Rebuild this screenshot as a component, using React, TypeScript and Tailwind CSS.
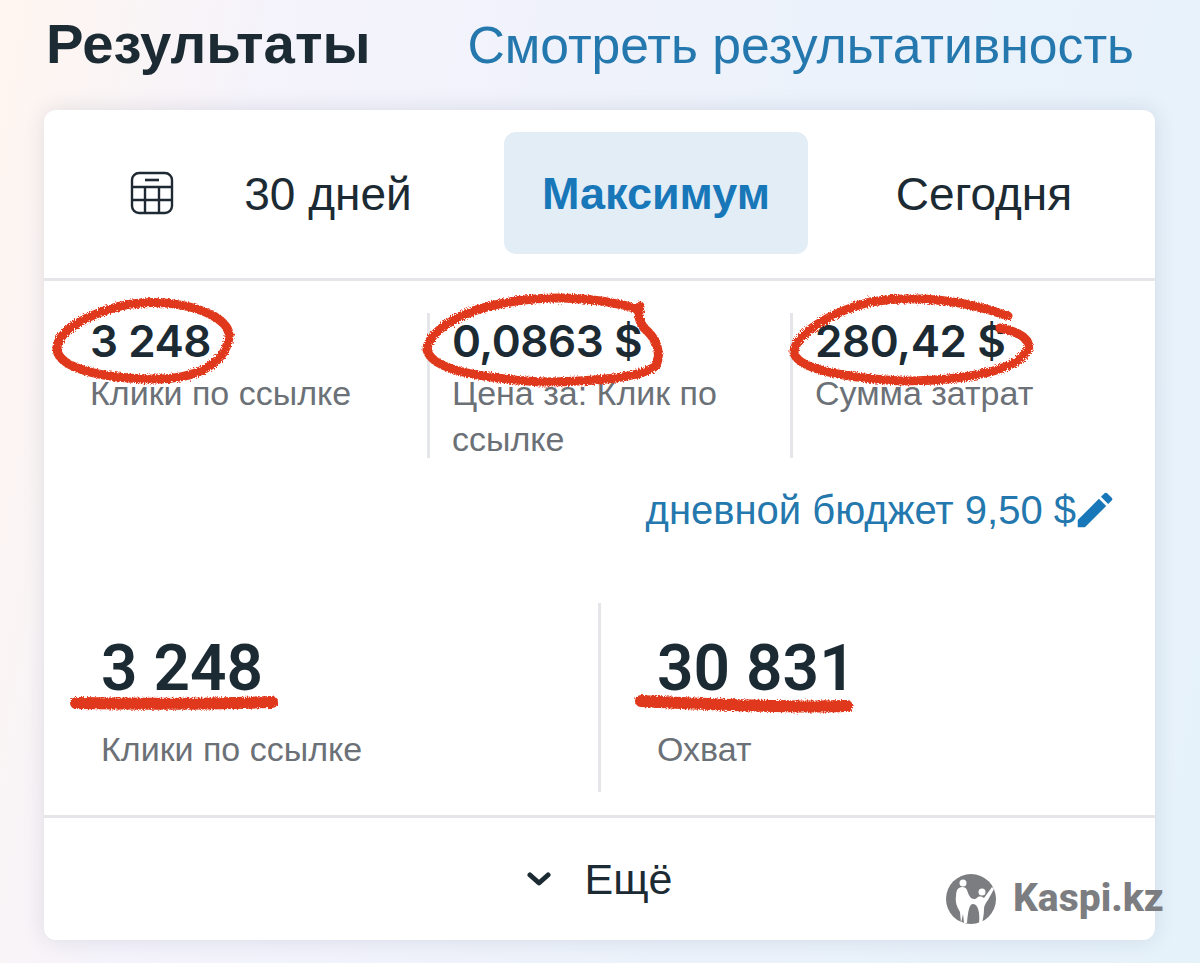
import React from 'react';
import { MdEdit } from 'react-icons/md';

const sans = "font-['Liberation_Sans',Arial,sans-serif]";

const CalendarIcon = () => (
  <svg width="44" height="44" viewBox="0 0 44 44" fill="none" stroke="#1f2933" strokeWidth="2.4">
    <rect x="2" y="2" width="40" height="40" rx="7" />
    <path d="M15 9h14" strokeWidth="2.6" />
    <path d="M2 16h40M2 29h40M15 16v26M29 16v26" />
  </svg>
);

const KaspiMark = () => (
  <svg width="50" height="50" viewBox="0 0 50 50">
    <circle cx="25" cy="25" r="25" fill="#7b7d80" />
    <g fill="#fff">
      <circle cx="17" cy="9" r="3.500" />
      <circle cx="36" cy="18" r="3.500" />
      <path d="M13 14C16 12 20 13 21 16C22 19 23 22 25 24C28 26 30 25 32 23C34 22 37 23 38 24L46 13L48 15L42 26C40 29 38 31 38 35C38 40 37 45 36 49L33 49C34 42 33 30 27 30C23 30 22 38 21 49L18 49L17 40L15 49L14 38C11 33 9 28 10 22C10 18 11 15 13 14Z" />
    </g>
  </svg>
);

// red marker strokes someone drew over the screenshot
const Scribbles = () => (
  <svg className="absolute inset-0 pointer-events-none" width="1200" height="963" viewBox="0 0 1200 963" fill="none">
    <defs>
      <filter id="rough" x="-5%" y="-20%" width="110%" height="140%">
        <feTurbulence type="fractalNoise" baseFrequency="0.7" numOctaves="2" seed="4" />
        <feDisplacementMap in="SourceGraphic" scale="5" />
      </filter>
    </defs>
    <g stroke="#e0391a" strokeWidth="9" strokeLinecap="round" filter="url(#rough)">
      <path d="M222 322C200 304 150 296 110 309C75 320 56 336 57 350C60 368 100 378 150 379C195 380 224 365 229 338C230 330 224 322 214 316" />
      <path d="M640 310C600 296 540 294 490 306C450 316 427 336 427 350C432 370 480 378 540 382C590 382 640 378 656 366C662 352 656 338 644 328C638 320 638 312 640 306" />
      <path d="M1008 316C970 302 920 294 870 302C830 312 795 335 794 352C796 370 850 378 900 381C960 381 1020 372 1029 347C1028 336 1015 331 1000 328" />
      <path strokeWidth="12" d="M76 703C130 704 210 704 272 702" />
      <path strokeWidth="12" d="M641 701C700 704 780 708 847 706" />
    </g>
  </svg>
);

const Metric = ({ value, label, divided }: { value: string; label: React.ReactNode; divided?: boolean }) => (
  <div className={`h-[145px] border-[#e4e6e9] ${divided ? 'border-l-[3px] pl-[22px]' : 'pl-[26px]'}`}>
    <div className="font-['Inter',sans-serif] text-[44px] leading-[57px] font-semibold tracking-[-0.01em] text-[#1c2b33]">{value}</div>
    <div className="text-[34px] leading-[46px] text-[#6b7177]">{label}</div>
  </div>
);

const BigMetric = ({ value, label, className }: { value: string; label: string; className: string }) => (
  <div className={`pt-[31px] ${className}`}>
    <div className="font-['Roboto',sans-serif] text-[64px] leading-[70px] font-semibold text-[#1c2b33]">{value}</div>
    <div className="mt-[22px] text-[34px] leading-[46px] text-[#6b7177]">{label}</div>
  </div>
);

export default function App() {
  return (
    <div className={`${sans} relative h-[963px] w-[1200px] overflow-hidden bg-[linear-gradient(100deg,#fff6f0_0%,#f5f3fb_20%,#ecf2fb_60%,#e6f2fa_100%)]`}>
      <div className="flex h-[110px] items-center justify-between pl-[46px] pr-[66px] pb-[22px]">
        <h1 className="text-[56.300px] leading-none font-bold text-[#1c2b33]">Результаты</h1>
        <a className="pt-[3px] text-[51.700px] leading-none text-[#2478ae]">Смотреть результативность</a>
      </div>

      <div className="mx-[44px] w-[1111px] h-[830px] rounded-[12px] bg-white shadow-[0_0_22px_rgba(30,50,80,0.12)]">
        <div className="flex items-center h-[171px] pl-[86px] pb-[3px] border-b-[3px] border-[#e4e6e9]">
          <CalendarIcon />
          <div className="ml-[2px] flex gap-[24px]">
            <div className="flex h-[122px] w-[304px] items-center justify-center pt-[3px] text-[46px] text-[#1c2b33]">30 дней</div>
            <div className="flex h-[122px] w-[304px] items-center justify-center rounded-[12px] bg-[#e3edf6] pt-[3px] text-[45px] font-bold text-[#1877b8]">Максимум</div>
            <div className="flex h-[122px] w-[304px] items-center justify-center pt-[3px] text-[46px] text-[#1c2b33]">Сегодня</div>
          </div>
        </div>

        <div className="grid grid-cols-[363px_363px_363px] pl-[20px] pt-[32px]">
          <Metric value="3 248" label="Клики по ссылке" />
          <Metric value="0,0863 $" label={<>Цена за: Клик по<br />ссылке</>} divided />
          <Metric value="280,42 $" label="Сумма затрат" divided />
        </div>

        <div className="mt-[29px] flex items-center justify-end pr-[37px] text-[40px] leading-[46px] text-[#2478ae]">
          дневной бюджет 9,50 $
          <MdEdit className="-ml-[4px] text-[#1877b8]" size={46} />
        </div>

        <div className="mt-[70px] flex h-[189px]">
          <BigMetric value="3 248" label="Клики по ссылке" className="w-[554px] pl-[57px]" />
          <BigMetric value="30 831" label="Охват" className="flex-1 pl-[56px] border-l-[3px] border-[#e4e6e9]" />
        </div>

        <div className="mt-[23px] flex h-[125px] items-center justify-center gap-[34px] border-t-[3px] border-[#e4e6e9] text-[43px] text-[#1c2b33]">
          <svg width="24" height="14" viewBox="0 0 24 14" fill="none" stroke="#1c2b33" strokeWidth="5" strokeLinecap="round" strokeLinejoin="round">
            <path d="M3 3l9 8 9-8" />
          </svg>
          Ещё
        </div>
      </div>

      <Scribbles />

      <div className="absolute left-[946px] top-[874px] flex items-start gap-[17px]">
        <KaspiMark />
        <span className="font-['Roboto',sans-serif] text-[39px] leading-[48px] font-extrabold text-[#7b7d80]">Kaspi.kz</span>
      </div>
    </div>
  );
}
